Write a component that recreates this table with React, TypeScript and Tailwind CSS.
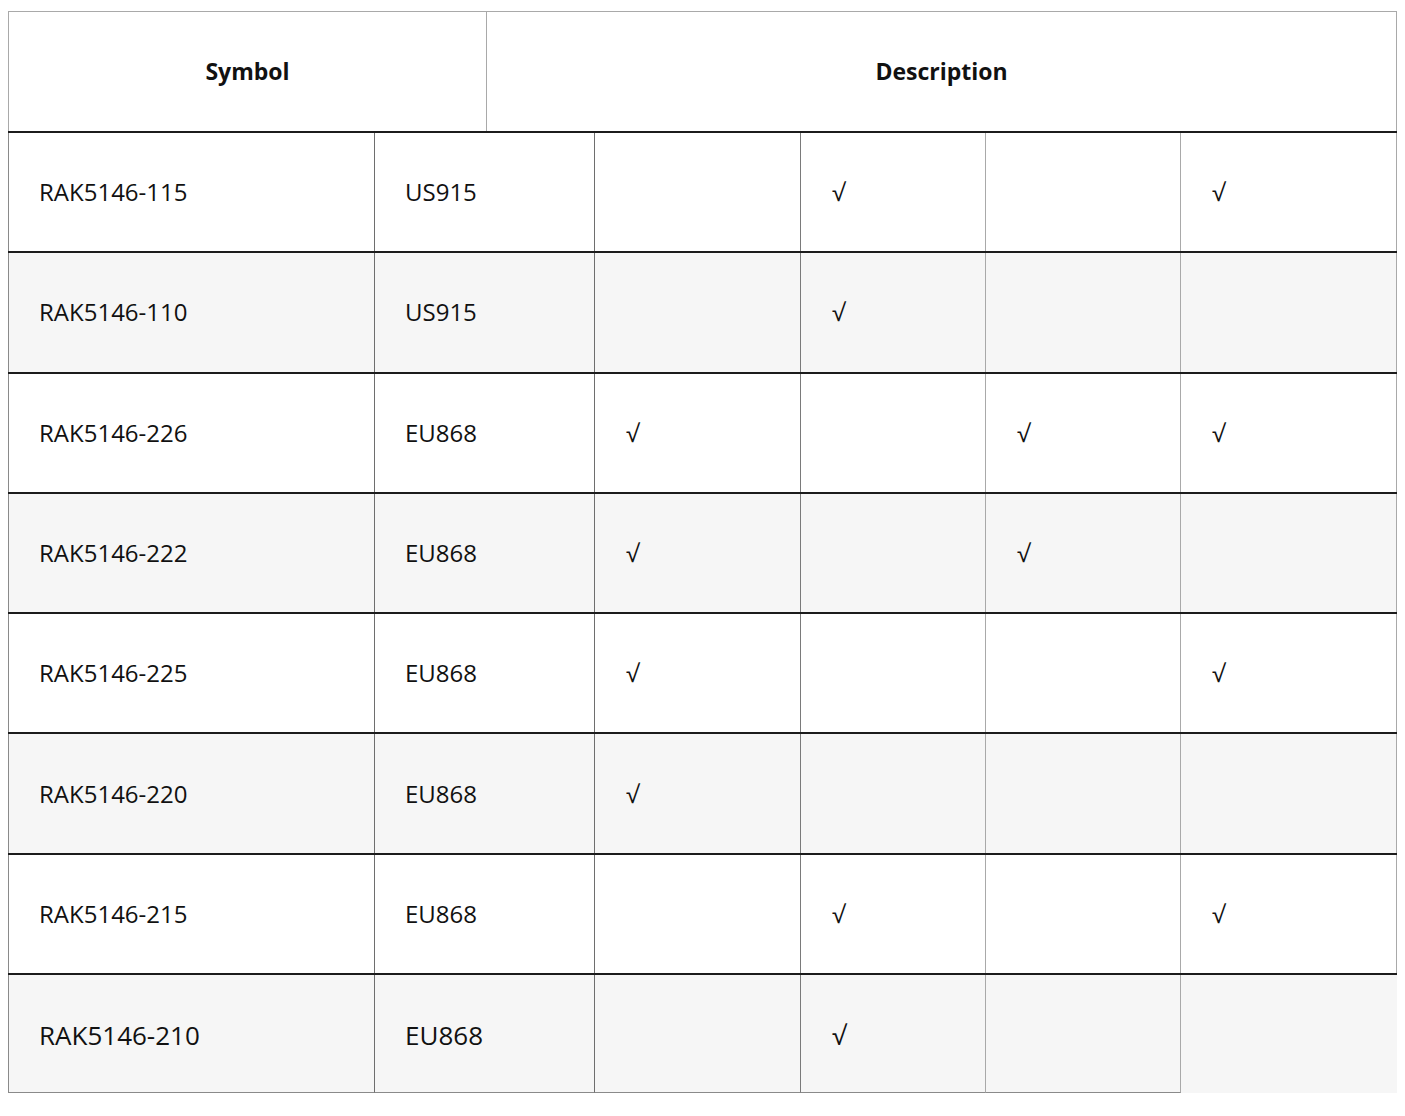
import React from 'react';

interface Row {
  symbol: string;
  band: string;
  checks: boolean[];
}

const rows: Row[] = [
  { symbol: 'RAK5146-115', band: 'US915', checks: [false, true, false, true] },
  { symbol: 'RAK5146-110', band: 'US915', checks: [false, true, false, false] },
  { symbol: 'RAK5146-226', band: 'EU868', checks: [true, false, true, true] },
  { symbol: 'RAK5146-222', band: 'EU868', checks: [true, false, true, false] },
  { symbol: 'RAK5146-225', band: 'EU868', checks: [true, false, false, true] },
  { symbol: 'RAK5146-220', band: 'EU868', checks: [true, false, false, false] },
  { symbol: 'RAK5146-215', band: 'EU868', checks: [false, true, false, true] },
  { symbol: 'RAK5146-210', band: 'EU868', checks: [false, true, false, false] },
];

// vertical rule colour per column (right edge)
const rightBorder = [
  'border-r border-r-[#6e6e6e]',
  'border-r border-r-[#6e6e6e]',
  'border-r border-r-[#7a7a7a]',
  'border-r border-r-[#a9a9a9]',
  'border-r border-r-[#a9a9a9]',
  'border-r border-r-[#a9a9a9]',
];

export default function App() {
  return (
    <div className="min-h-screen bg-white pl-2 pt-[11px] text-[#111]" style={{ fontFamily: '"Open Sans", "DejaVu Sans", sans-serif' }}>
      <div className="w-[1389px]">
        {/* header */}
        <div className="grid h-[120px] grid-cols-[478px_1fr] border border-b-0 border-[#a9a9a9]">
          <div className="flex items-center justify-center border-r border-r-[#a9a9a9] text-[23px] font-bold">Symbol</div>
          <div className="flex items-center justify-center text-[23px] font-bold">Description</div>
        </div>

        {rows.map((row, i) => {
          const last = i === rows.length - 1;
          const cells = [row.symbol, row.band, ...row.checks.map((c) => (c ? '√' : ''))];
          return (
            <div
              key={row.symbol}
              className={`grid h-[120.3px] grid-cols-[367px_220px_206px_185px_195px_216px] border-t-2 border-t-[#1c1c1c] ${i % 2 === 1 ? 'bg-[#f6f6f6]' : 'bg-white'}`}
            >
              {cells.map((text, j) => {
                const isLastCol = j === cells.length - 1;
                let cls = 'flex items-center ';
                cls += j < 2 ? 'pl-[30px] ' : 'pl-[31px] ';
                if (j === 0) cls += 'border-l border-l-[#8a8a8a] ';
                if (!(last && isLastCol)) cls += rightBorder[j] + ' ';
                if (last && !isLastCol) cls += 'border-b border-b-[#8a8a8a] ';
                cls += last ? 'text-[26px] pt-[4px]' : 'text-[24px]';
                return (
                  <div key={j} className={cls}>
                    {text}
                  </div>
                );
              })}
            </div>
          );
        })}
      </div>
    </div>
  );
}
